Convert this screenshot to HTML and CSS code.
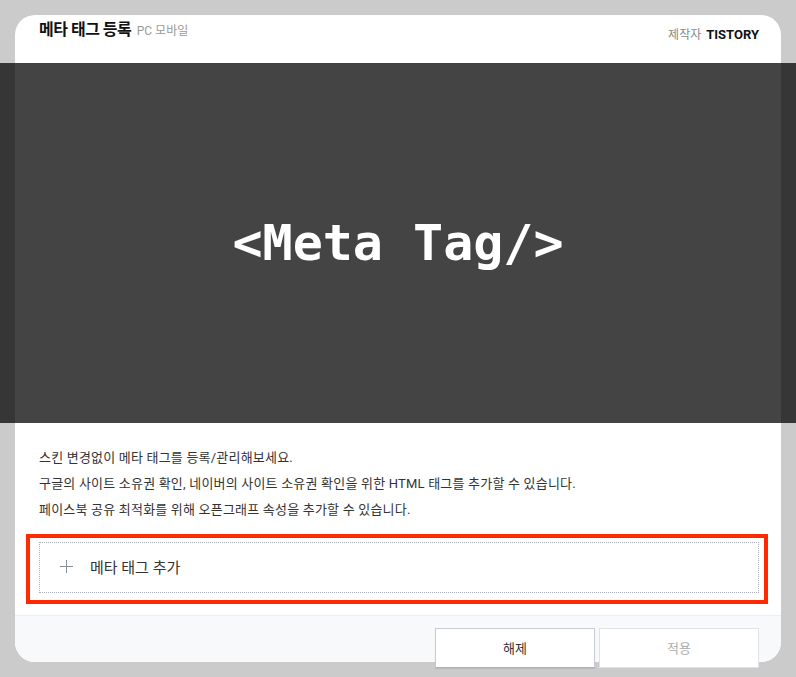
FILE: index.html
```html
<!DOCTYPE html>
<html lang="ko">
<head>
    <meta charset="UTF-8">
    <meta name="viewport" content="width=device-width, initial-scale=1.0">
    <title>메타 태그 등록</title>
    <link rel="stylesheet" href="styles.css">
</head>
<body>
    <div class="plugin">
        <div class="plugin-head">
            <h1 class="plugin-title">메타 태그 등록 <span class="plugin-platform">PC 모바일</span></h1>
            <div class="plugin-maker">제작자 <strong>TISTORY</strong></div>
        </div>

        <div class="plugin-banner">&lt;Meta Tag/&gt;</div>

        <div class="plugin-body">
            <p>스킨 변경없이 메타 태그를 등록/관리해보세요.</p>
            <p>구글의 사이트 소유권 확인, 네이버의 사이트 소유권 확인을 위한 HTML 태그를 추가할 수 있습니다.</p>
            <p>페이스북 공유 최적화를 위해 오픈그래프 속성을 추가할 수 있습니다.</p>

            <div class="add-wrap">
                <button class="add-tag">
                    <svg width="13" height="13" viewBox="0 0 13 13"><path d="M6.5 0v13M0 6.5h13" stroke="#8a8f99" stroke-width="1"/></svg>
                    메타 태그 추가
                </button>
            </div>
        </div>

        <div class="plugin-foot">
            <button class="btn">해제</button>
            <button class="btn btn-off">적용</button>
        </div>
    </div>
</body>
</html>
```

FILE: styles.css
```css
body {
    margin: 0;
    padding: 15px;
    background: #cbcbcc;
    font-family: Roboto, "Noto Sans CJK KR", sans-serif;
    color: #333;
}
.plugin {
    width: 766px;
    background: #fff;
    border-radius: 20px;
}
.plugin-head {
    height: 48px;
    padding: 0 22px 0 24px;
    display: flex;
    justify-content: space-between;
}
.plugin-title {
    margin: 2px 0 0;
    font-size: 16px;
    font-weight: bold;
    letter-spacing: -0.5px;
    color: #111;
    line-height: 26px;
}
.plugin-platform {
    margin-left: 2px;
    font-size: 12px;
    font-weight: normal;
    letter-spacing: 0;
    color: #999;
}
.plugin-maker {
    margin-top: 11px;
    font-size: 12px;
    line-height: 18px;
    color: #888;
}
.plugin-maker strong {
    margin-left: 2px;
    font-size: 13px;
    color: #111;
}
.plugin-banner {
    margin: 0 -15px;
    height: 360px;
    display: flex;
    align-items: center;
    justify-content: center;
    background: linear-gradient(to right, #363636 15px, #444 15px, #444 781px, #363636 781px);
    color: #fff;
    font-family: "DejaVu Sans Mono", monospace;
    font-weight: bold;
    font-size: 50px;
}
.plugin-body {
    padding: 22px 13px 11px 11px;
}
.plugin-body p {
    margin: 0 0 0 13px;
    font-size: 13px;
    line-height: 26px;
    letter-spacing: 0.2px;
    color: #333;
}
.add-wrap {
    margin-top: 11px;
    border: 4px solid #ff2a00;
    padding: 4px 5px 7px 9px;
}
.add-tag {
    display: flex;
    align-items: center;
    gap: 17px;
    width: 100%;
    height: 51px;
    padding: 0 20px 2px;
    border: 1px dotted #a9adb8;
    background: #fff;
    font-family: inherit;
    font-size: 15px;
    color: #333;
    text-align: left;
}
.plugin-foot {
    box-sizing: border-box;
    height: 47px;
    border-top: 1px solid #eceef1;
    background: #f8f9fb;
    border-radius: 0 0 20px 20px;
    padding: 12px 22px 0 0;
    display: flex;
    justify-content: flex-end;
    gap: 4px;
}
.btn {
    width: 160px;
    height: 40px;
    flex: none;
    padding-bottom: 2px;
    background: #fff;
    border: 1px solid #c8cbd1;
    border-bottom-color: #aeb1b7;
    box-shadow: 0 1px 1px rgba(0, 0, 0, 0.08);
    font-family: inherit;
    font-size: 13px;
    color: #333;
}
.btn-off {
    border-color: #dfe2e7;
    box-shadow: none;
    color: #aaa;
}
```
